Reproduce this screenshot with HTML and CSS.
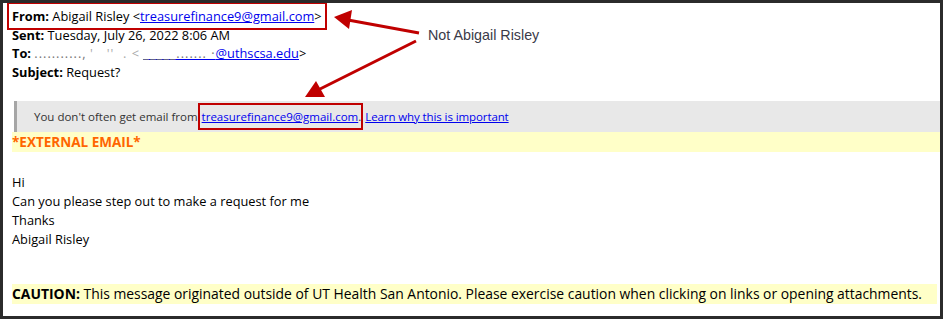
FILE: index.html
```html
<!DOCTYPE html>
<html lang="en">
<head>
  <meta charset="UTF-8">
  <meta name="viewport" content="width=device-width, initial-scale=1.0">
  <link rel="stylesheet" href="styles.css">
  <title>Phishing email example</title>
</head>
<body>
  <div class="frame">
    <div class="headers">
      <div class="hline"><span class="redbox from-box"><b>From:</b> Abigail Risley &lt;<a href="#">treasurefinance9@gmail.com</a>&gt;</span></div>
      <div class="hline"><b>Sent:</b> Tuesday, July 26, 2022 8:06 AM</div>
      <div class="hline"><b>To:</b> <span class="smudge">...........,</span> <span class="smudge faint">' &nbsp; '' &nbsp;. &lt;</span> <a href="#"><span class="smudge">_____.......&nbsp;·</span>@uthscsa.edu</a>&gt;</div>
      <div class="hline"><b>Subject:</b> Request?</div>
    </div>

    <div class="notice">
      You don't often get email from<span class="redbox link-box"><a href="#">treasurefinance9@gmail.com</a>.</span><a class="learn" href="#">Learn why this is important</a>
    </div>
    <div class="external">*EXTERNAL EMAIL*</div>

    <div class="message">
      <p>Hi</p>
      <p>Can you please step out to make a request for me</p>
      <p>Thanks</p>
      <p>Abigail Risley</p>
    </div>

    <div class="caution"><b>CAUTION:</b> This message originated outside of UT Health San Antonio. Please exercise caution when clicking on links or opening attachments.</div>

    <!-- annotations drawn on top of the screenshot -->
    <svg class="arrows" width="943" height="319" viewBox="0 0 943 319">
      <g stroke="#c00000" stroke-width="3" fill="#c00000">
        <line x1="419" y1="33" x2="348" y2="20" />
        <polygon points="334,17 352,10 349,29" stroke="none" />
        <line x1="416" y1="41" x2="318" y2="90" />
        <polygon points="305,97 316,81 325,97" stroke="none" />
      </g>
    </svg>
    <span class="note">Not Abigail Risley</span>
  </div>
</body>
</html>
```
FILE: styles.css
```css
* {
  box-sizing: border-box;
}
body {
  margin: 0;
  background-color: #2b2b2b;
}
.frame {
  position: relative;
  width: 943px;
  height: 319px;
  border: 3px solid #2b2b2b;
  background-color: #fff;
  font-family: "Open Sans", Arial, sans-serif;
  font-size: 12.8px;
  color: #000;
  overflow: hidden;
}
a {
  color: #0000ee;
}
.headers {
  padding: 4px 0 0 9px;
}
.hline {
  line-height: 18.7px;
  white-space: nowrap;
}
.redbox {
  border: 2px solid #c00000;
}
.from-box {
  padding: 3px 3px 3px 3px;
  margin-left: -5px;
}
.smudge {
  color: #777;
  letter-spacing: 1px;
}
.smudge.faint {
  color: #aaa;
}
.notice {
  margin: 19px 0 0 11px;
  height: 31px;
  line-height: 31px;
  padding-left: 17px;
  background-color: #e8e8e8;
  border-left: 3px solid #a6a6a6;
  font-size: 11.5px;
  color: #333;
  white-space: nowrap;
}
.link-box {
  padding: 4px 0 4px 2px;
  margin-left: 0;
}
.learn {
  margin-left: 2px;
  letter-spacing: -0.1px;
}
.external {
  margin-left: 9px;
  height: 20px;
  line-height: 20px;
  background-color: #ffffc8;
  color: #ff6600;
  font-weight: bold;
  font-size: 13.5px;
}
.message {
  padding: 21px 0 0 9px;
}
.message p {
  margin: 0;
  line-height: 19px;
}
.caution {
  margin: 35px 3px 0 9px;
  height: 20px;
  line-height: 20px;
  background-color: #ffffc8;
  font-size: 13.9px;
  white-space: nowrap;
}
.arrows {
  position: absolute;
  left: -3px;
  top: -3px;
}
.note {
  position: absolute;
  left: 425px;
  top: 24px;
  font-family: "Liberation Sans", Arial, sans-serif;
  font-size: 14.3px;
  color: #3a3a48;
}
```
